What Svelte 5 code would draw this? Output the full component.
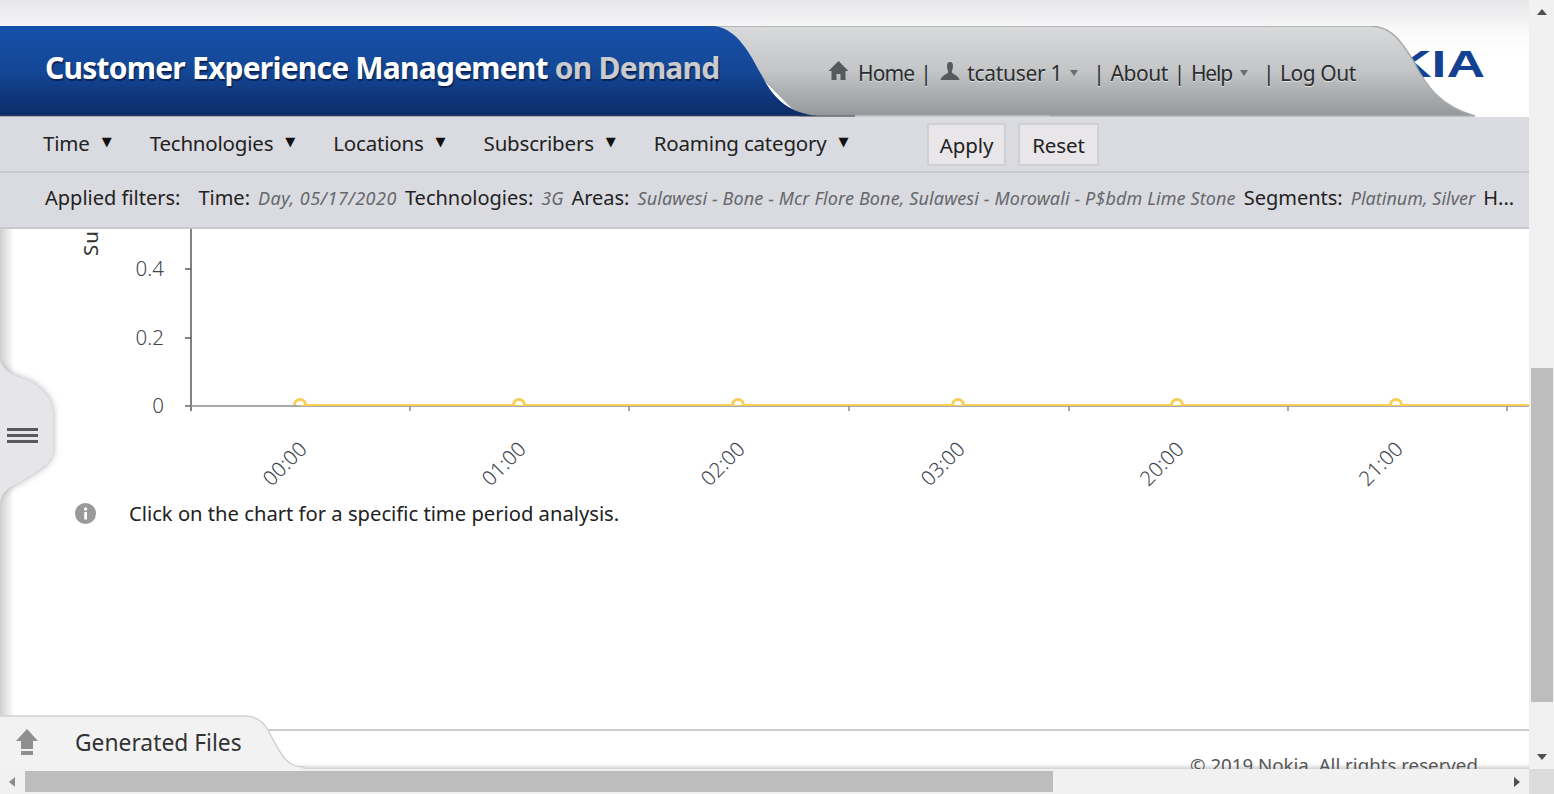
<script lang="ts">
  const filters = ["Time", "Technologies", "Locations", "Subscribers", "Roaming category"];

  const yTicks = [
    { label: "0.4", y: 40 },
    { label: "0.2", y: 109 },
    { label: "0", y: 177 },
  ];

  const xTicks = [
    { label: "00:00", x: 300 },
    { label: "01:00", x: 519 },
    { label: "02:00", x: 738 },
    { label: "03:00", x: 958 },
    { label: "20:00", x: 1177 },
    { label: "21:00", x: 1396 },
  ];
</script>

<div class="page">
  <div class="viewport">
    <div class="content">
      <div class="top-strip"></div>

      <header class="header">
        <svg class="header-art" width="1529" height="91" viewBox="0 0 1529 91" aria-hidden="true">
          <defs>
            <linearGradient id="blue" x1="0" y1="0" x2="0" y2="1">
              <stop offset="0" stop-color="#1650aa" />
              <stop offset="0.5" stop-color="#144796" />
              <stop offset="1" stop-color="#0c2b68" />
            </linearGradient>
            <linearGradient id="grey" x1="0" y1="0" x2="0" y2="1">
              <stop offset="0" stop-color="#d9dadb" />
              <stop offset="0.5" stop-color="#c3c5c6" />
              <stop offset="1" stop-color="#94989a" />
            </linearGradient>
          </defs>
          <text class="logo" x="1485" y="51" text-anchor="end" textLength="172" lengthAdjust="spacingAndGlyphs">NOKIA</text>
          <path
            d="M712 0 H1371 C1392 1 1402 16 1414 36 C1426 60 1440 80 1475 90 H800 Z"
            fill="url(#grey)"
            stroke="#a9abac"
            stroke-width="1.5"
          />
          <path d="M0 0 H714 C738 3 750 28 762 50 C775 75 790 87 818 90 H0 Z" fill="url(#blue)" />
          <path d="M0 90 H855" stroke="#4a4f58" stroke-width="1" />
          <path d="M855 90 H1050" stroke="#c9cbce" stroke-width="1" />
        </svg>

        <h1 class="title">Customer Experience Management <span>on Demand</span></h1>

        <nav class="user-nav">
          <svg class="nav-icon" width="21" height="21" viewBox="0 0 21 21" aria-hidden="true">
            <path d="M10.5 1 L20.5 11 H17.5 V20 H12.5 V14 H8.5 V20 H3.5 V11 H0.5 Z" fill="#555a5c" />
          </svg>
          <span class="nav-item home">Home</span>
          <span class="sep">|</span>
          <svg class="nav-icon person" width="20" height="20" viewBox="0 0 20 20" aria-hidden="true">
            <path d="M10 1 C12.2 1 13.2 3 13 5.5 C12.8 8 11.8 9.5 11.8 11 C11.8 13 19 14.5 19.5 19 H0.5 C1 14.5 8.2 13 8.2 11 C8.2 9.5 7.2 8 7 5.5 C6.8 3 7.8 1 10 1 Z" fill="#555a5c" />
          </svg>
          <span class="nav-item user">tcatuser 1</span>
          <span class="caret"></span>
          <span class="sep wide">|</span>
          <span class="nav-item">About</span>
          <span class="sep">|</span>
          <span class="nav-item help">Help</span>
          <span class="caret"></span>
          <span class="sep wide">|</span>
          <span class="nav-item">Log Out</span>
        </nav>
      </header>

      <div class="filter-bar">
        <div class="menus">
          {#each filters as item}
            <span class="menu">{item}<span class="menu-arrow">▼</span></span>
          {/each}
        </div>
        <button type="button" class="action">Apply</button>
        <button type="button" class="action">Reset</button>
      </div>

      <div class="applied">
        <span class="label lead">Applied filters:</span>
        <span class="label">Time:</span>
        <em class="date">Day, 05/17/2020</em>
        <span class="label">Technologies:</span>
        <em>3G</em>
        <span class="label">Areas:</span>
        <em class="areas">Sulawesi - Bone - Mcr Flore Bone, Sulawesi - Morowali - P$bdm Lime Stone</em>
        <span class="label">Segments:</span>
        <em>Platinum, Silver</em>
        <span class="label">H...</span>
      </div>

      <main class="chart-area">
        <svg class="chart" width="1529" height="270" viewBox="0 0 1529 270" role="img" aria-label="Subscribers by hour">
          <text class="axis-title" transform="translate(98 27) rotate(-90)">Sub</text>
          <path d="M191 0 V182" stroke="#55585c" stroke-width="1.5" fill="none" />
          {#each yTicks as tick}
            <path d="M185 {tick.y} H191" stroke="#55585c" stroke-width="1.5" />
            <text class="tick" x="164" y={tick.y + 7} text-anchor="end">{tick.label}</text>
          {/each}
          <path d="M185 177 H1529" stroke="#8b8d90" stroke-width="1.5" />
          {#each [410, 629, 849, 1069, 1288, 1507] as x}
            <path d="M{x} 177 V182" stroke="#8b8d90" stroke-width="1.5" />
          {/each}
          <path d="M300 176 H1529" stroke="#f8cf55" stroke-width="2" />
          {#each xTicks as tick}
            <path d="M294.5 176 a5.5 5.5 0 0 1 11 0" transform="translate({tick.x - 300} 0)" fill="#fff" stroke="#f8cf55" stroke-width="3" />
            <text class="tick" transform="translate({tick.x - 13} 237) rotate(-45)" text-anchor="middle" dy="4">{tick.label}</text>
          {/each}
        </svg>

        <p class="hint">
          <svg width="21" height="21" viewBox="0 0 21 21" aria-hidden="true">
            <circle cx="10.5" cy="10.5" r="10.5" fill="#9a9a9a" />
            <rect x="9.2" y="9" width="2.8" height="7.5" fill="#fff" />
            <circle cx="10.6" cy="6" r="1.7" fill="#fff" />
          </svg>
          <span>Click on the chart for a specific time period analysis.</span>
        </p>

        <div class="edge-shadow"></div>
        <div class="side-handle">
          <svg width="66" height="146" viewBox="0 0 66 146" aria-hidden="true">
            <defs>
              <filter id="soft" x="-30%" y="-10%" width="160%" height="120%">
                <feGaussianBlur stdDeviation="3.5" />
              </filter>
            </defs>
            <path d="M0 0 C1 8 12 16 27 20 C40 26 53 38 53 53 V90 C53 103 42 108 20 122 C8 128 2 132 0 142 Z" fill="#a8a8a8" filter="url(#soft)" />
            <path d="M0 0 C1 8 12 16 27 20 C40 26 53 38 53 53 V90 C53 103 42 108 20 122 C8 128 2 132 0 142 Z" fill="#e6e6ea" />
            <rect x="7" y="68" width="31" height="3" fill="#58595b" />
            <rect x="7" y="74" width="31" height="3" fill="#58595b" />
            <rect x="7" y="80" width="31" height="3" fill="#58595b" />
          </svg>
        </div>
      </main>

      <footer class="footer">
        <div class="copy-clip">
          <div class="copyright">© 2019 Nokia. All rights reserved.</div>
        </div>
        <div class="tab">
          <svg class="tab-art" width="310" height="54" viewBox="0 0 310 54" aria-hidden="true">
            <path d="M-2 1 H245 C258 1 264 8 268 15 C276 30 282 43 290 48 C294 51 298 52 304 52 V56 H-2 Z" fill="#f2f2f2" stroke="#d2d2d2" stroke-width="1.5" />
          </svg>
          <svg class="tab-icon" width="22" height="26" viewBox="0 0 22 26" aria-hidden="true">
            <path d="M11 0 L22 12 H17 V20 H5 V12 H0 Z" fill="#8f8f8f" />
            <rect x="5" y="22" width="12" height="4" fill="#8f8f8f" />
          </svg>
          <span>Generated Files</span>
        </div>
      </footer>
    </div>

    <div class="v-scroll">
      <span class="tri up"></span>
      <div class="v-track"><div class="v-thumb"></div></div>
      <span class="tri down"></span>
    </div>
  </div>

  <div class="h-scroll">
    <span class="tri left"></span>
    <div class="h-track"><div class="h-thumb"></div></div>
    <span class="tri right"></span>
    <div class="corner"></div>
  </div>
</div>

<style>
  :global(body) {
    margin: 0;
    overflow: hidden;
    background: #fff;
  }

  .page {
    width: 1554px;
    height: 794px;
    display: flex;
    flex-direction: column;
    overflow: hidden;
    font-family: "Noto Sans", "Open Sans", sans-serif;
    color: #222;
  }

  .viewport {
    flex: 1;
    min-height: 0;
    display: flex;
  }

  .content {
    width: 1529px;
    display: flex;
    flex-direction: column;
    overflow: hidden;
  }

  .top-strip {
    height: 26px;
    flex: none;
    box-sizing: border-box;
    border-top: 2px solid #e8e8e8;
    background: linear-gradient(#e6e7ea, #f6f6f7);
  }

  .header {
    position: relative;
    height: 91px;
    flex: none;
    display: flex;
    align-items: flex-start;
    background: linear-gradient(#f8f8f9, #fff 30%);
  }

  .header-art {
    position: absolute;
    left: 0;
    top: 0;
  }

  .logo {
    font-family: "Liberation Sans", sans-serif;
    font-weight: 700;
    font-size: 37px;
    fill: #124191;
  }

  .title {
    position: relative;
    margin: 20px 0 0 45px;
    font-size: 30px;
    line-height: 44px;
    font-weight: 700;
    letter-spacing: -0.78px;
    white-space: nowrap;
    color: #fff;
    text-shadow: 1px 2px 1px #0b2354;
  }

  .title span {
    color: #c9cbce;
  }

  .user-nav {
    position: absolute;
    left: 828px;
    top: 31px;
    display: flex;
    align-items: center;
    height: 32px;
    font-size: 21px;
    letter-spacing: -0.45px;
    color: #2b2d2f;
    text-shadow: 0 1px 0 #e2e3e4;
    white-space: nowrap;
  }

  .nav-icon {
    flex: none;
    margin-top: -5px;
  }

  .nav-icon.person {
    margin-left: 3px;
  }

  .home {
    margin-left: 9px;
    letter-spacing: -0.9px;
  }

  .user {
    margin-left: 7px;
    letter-spacing: -0.3px;
  }

  .help {
    letter-spacing: -1.2px;
  }

  .sep {
    margin: 0 6px;
  }

  .sep.wide {
    margin-left: 15px;
  }

  .caret {
    width: 0;
    height: 0;
    margin-left: 8px;
    border-left: 4px solid transparent;
    border-right: 4px solid transparent;
    border-top: 6px solid #6a6d70;
  }

  .filter-bar {
    height: 56px;
    flex: none;
    box-sizing: border-box;
    display: flex;
    align-items: center;
    padding-left: 43px;
    background: #dadbe0;
    border-bottom: 2px solid #c8c9ce;
  }

  .menus {
    width: 884px;
    display: flex;
    gap: 38px;
    font-size: 20.5px;
    letter-spacing: -0.2px;
    margin-top: -3px;
  }

  .menu {
    display: flex;
    align-items: center;
    gap: 12px;
    white-space: nowrap;
  }

  .menu-arrow {
    font-family: "DejaVu Sans", sans-serif;
    font-size: 13px;
    letter-spacing: 0;
    color: #111;
    margin-top: -2px;
  }

  .action {
    width: 79px;
    height: 43px;
    box-sizing: border-box;
    margin: 1px 12px 0 0;
    padding: 0;
    font: inherit;
    font-size: 20.5px;
    letter-spacing: -0.1px;
    color: #222;
    background: #e8e6e8;
    border: 2px solid #cfd0d4;
  }

  .action:last-child {
    width: 81px;
  }

  .applied {
    height: 56px;
    flex: none;
    box-sizing: border-box;
    display: flex;
    align-items: center;
    gap: 8px;
    padding: 0 0 5px 45px;
    white-space: nowrap;
    overflow: hidden;
    background: #dadbe0;
    border-bottom: 2px solid #c8c9ce;
    font-size: 20px;
  }

  .applied .lead {
    margin-right: 10px;
  }

  .applied em {
    font-size: 18px;
    color: #66686c;
  }

  .applied em.date {
    letter-spacing: 0.5px;
  }

  .applied em.areas {
    letter-spacing: 0.12px;
  }

  .chart-area {
    position: relative;
    flex: 1;
    min-height: 0;
    overflow: hidden;
    background: #fff;
  }

  .chart {
    display: block;
  }

  .axis-title {
    font-size: 20.5px;
    letter-spacing: 1px;
    fill: #333;
  }

  .tick {
    font-size: 20.5px;
    font-weight: 300;
    fill: #3f4650;
  }

  .hint {
    display: flex;
    align-items: center;
    gap: 33px;
    margin: 0 0 0 75px;
    font-size: 20.2px;
    color: #222;
  }

  .edge-shadow {
    position: absolute;
    left: 0;
    top: 0;
    bottom: 0;
    width: 14px;
    background: linear-gradient(90deg, #cfcfcf, #fff);
  }

  .side-handle {
    position: absolute;
    left: 0;
    top: 131px;
    line-height: 0;
  }

  .footer {
    position: relative;
    height: 40px;
    flex: none;
    box-sizing: border-box;
    border-top: 2px solid #cccccc;
    background: #fff;
  }

  .copy-clip {
    position: absolute;
    inset: 0;
    overflow: hidden;
    box-shadow: inset 0 -5px 4px -3px #c8c8c8;
  }

  .copyright {
    position: absolute;
    left: 1190px;
    top: 21px;
    font-size: 18.7px;
    line-height: 26px;
    color: #555;
    white-space: nowrap;
  }

  .tab {
    position: absolute;
    left: 0;
    top: -16px;
    width: 310px;
    height: 54px;
    display: flex;
    align-items: center;
    font-size: 22.8px;
    color: #333;
  }

  .tab-art {
    position: absolute;
    left: 0;
    top: 0;
  }

  .tab-icon {
    position: relative;
    margin: 0 37px 0 16px;
    flex: none;
  }

  .tab span {
    position: relative;
  }

  .v-scroll {
    width: 25px;
    flex: none;
    display: flex;
    flex-direction: column;
    align-items: center;
    background: #f1f1f1;
  }

  .v-track {
    flex: 1;
    width: 100%;
    position: relative;
  }

  .v-thumb {
    position: absolute;
    left: 2px;
    right: 1px;
    top: 353px;
    height: 334px;
    background: #bdbdbd;
  }

  .tri {
    width: 0;
    height: 0;
    flex: none;
  }

  .tri.up {
    margin: 9px 0 0;
    border: 5.5px solid transparent;
    border-top: 0;
    border-bottom: 6px solid #4f4f4f;
  }

  .tri.down {
    margin: 0 0 9px;
    border: 5.5px solid transparent;
    border-bottom: 0;
    border-top: 6px solid #4f4f4f;
  }

  .h-scroll {
    height: 25px;
    flex: none;
    display: flex;
    align-items: center;
    background: #f1f1f1;
  }

  .h-track {
    flex: 1;
    height: 100%;
    position: relative;
  }

  .h-thumb {
    position: absolute;
    left: 10px;
    top: 2px;
    bottom: 2px;
    width: 1028px;
    background: #bdbdbd;
  }

  .tri.left {
    margin-left: 9px;
    border: 5.5px solid transparent;
    border-left: 0;
    border-right: 6px solid #8c8c8c;
  }

  .tri.right {
    margin-right: 9px;
    border: 5.5px solid transparent;
    border-right: 0;
    border-left: 6px solid #4f4f4f;
  }

  .corner {
    width: 25px;
    height: 100%;
    flex: none;
    background: #dcdcdc;
  }
</style>
